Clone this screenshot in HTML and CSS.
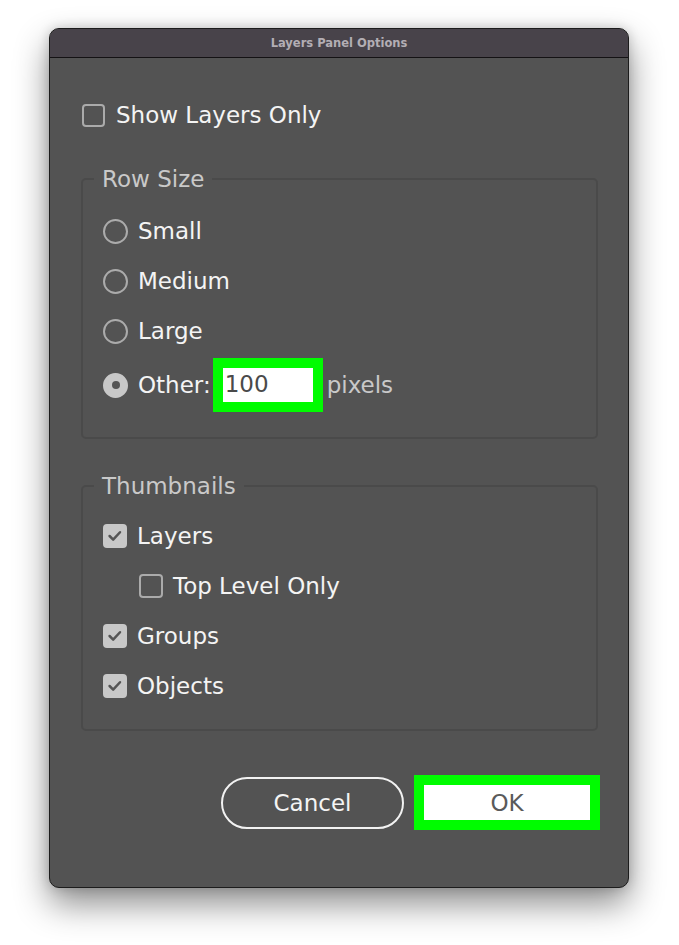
FILE: index.html
```html
<!DOCTYPE html>
<html>
<head>
<meta charset="utf-8">
<link rel="stylesheet" href="styles.css">
</head>
<body>
<div class="window">
  <div class="titlebar">Layers Panel Options</div>
  <div class="content">
    <div class="row top-row">
      <span class="check small"></span>
      <span class="label">Show Layers Only</span>
    </div>

    <fieldset class="group">
      <legend>Row Size</legend>
      <div class="row"><span class="radio"></span><span class="label">Small</span></div>
      <div class="row"><span class="radio"></span><span class="label">Medium</span></div>
      <div class="row"><span class="radio"></span><span class="label">Large</span></div>
      <div class="row other-row">
        <span class="radio on"></span><span class="label">Other:</span>
        <span class="highlight field"><span class="input">100</span></span>
        <span class="unit">pixels</span>
      </div>
    </fieldset>

    <fieldset class="group thumbs">
      <legend>Thumbnails</legend>
      <div class="row"><span class="check on"><svg viewBox="0 0 24 24"><path d="M5.5 12 L9.8 16.3 L18 7.5" /></svg></span><span class="label">Layers</span></div>
      <div class="row indent"><span class="check"></span><span class="label">Top Level Only</span></div>
      <div class="row"><span class="check on"><svg viewBox="0 0 24 24"><path d="M5.5 12 L9.8 16.3 L18 7.5" /></svg></span><span class="label">Groups</span></div>
      <div class="row"><span class="check on"><svg viewBox="0 0 24 24"><path d="M5.5 12 L9.8 16.3 L18 7.5" /></svg></span><span class="label">Objects</span></div>
    </fieldset>

    <div class="buttons">
      <span class="btn cancel">Cancel</span>
      <span class="highlight okwrap"><span class="btn ok">OK</span></span>
    </div>
  </div>
</div>
</body>
</html>
```

FILE: styles.css
```css
* { box-sizing: border-box; }
html, body { margin: 0; padding: 0; }
body {
  background: #ffffff;
  width: 679px;
  height: 945px;
  overflow: hidden;
  font-family: "DejaVu Sans", "Noto Sans", sans-serif;
}
.window {
  margin: 28px 0 0 49px;
  width: 580px;
  height: 860px;
  background: #535353;
  border: 1px solid #1c1c1c;
  border-radius: 10px;
  overflow: hidden;
  box-shadow: 0 16px 34px rgba(0,0,0,0.45), 0 0 12px rgba(0,0,0,0.18);
}
.titlebar {
  height: 29px;
  background: #48434a;
  border-bottom: 1px solid #141214;
  color: #b3aeb4;
  font-size: 11.5px;
  font-weight: bold;
  text-align: center;
  line-height: 28px;
}
.content {
  padding: 32px 30px 0 32px;
  color: #f2f2f2;
}
.row {
  display: flex;
  align-items: center;
  height: 50px;
}
.top-row { height: 50px; }
.label {
  font-size: 23px;
  color: #f4f4f4;
  margin-left: 10px;
  white-space: nowrap;
}
.top-row .label { margin-left: 11px; }
.check {
  width: 24px;
  height: 24px;
  border: 2px solid #ababab;
  border-radius: 4px;
  flex: none;
  display: flex;
  align-items: center;
  justify-content: center;
}
.check.small { width: 23px; height: 23px; }
.check.on {
  background: #c8c8c8;
  border-color: #c8c8c8;
}
.check svg {
  width: 22px;
  height: 22px;
  fill: none;
  stroke: #555555;
  stroke-width: 3;
  stroke-linecap: round;
  stroke-linejoin: round;
}
.radio {
  width: 25px;
  height: 25px;
  border: 2px solid #ababab;
  border-radius: 50%;
  flex: none;
}
.radio.on {
  background: #c8c8c8;
  border-color: #c8c8c8;
  display: flex;
  align-items: center;
  justify-content: center;
}
.radio.on::after {
  content: "";
  width: 8px;
  height: 8px;
  border-radius: 50%;
  background: #555555;
}
.group {
  margin: 25px 0 0 -1px;
  padding: 13px 0 25px 20px;
  border: 2px solid #4a4a4a;
  border-radius: 5px;
  min-width: 0;
}
.group legend {
  margin-left: -9px;
  padding: 0 8px;
  font-size: 23px;
  color: #c9c9c9;
  line-height: 28px;
}
.other-row { height: 54px; margin-top: 2px; }
.highlight {
  display: inline-block;
  border: 10px solid #00fc00;
}
.field {
  margin-left: 2px;
  width: 110px;
  height: 54px;
}
.input {
  display: block;
  width: 100%;
  height: 100%;
  background: #ffffff;
  color: #4a4a4a;
  font-size: 23px;
  line-height: 33px;
  padding-left: 2px;
}
.unit {
  font-size: 23px;
  color: #c9c9c9;
  margin-left: 4px;
}
.thumbs {
  margin-top: 33px;
  padding-top: 11px;
  padding-bottom: 18px;
}
.indent { padding-left: 36px; }
.buttons {
  display: flex;
  justify-content: flex-end;
  align-items: center;
  margin-top: 44px;
  margin-right: -2px;
}
.btn {
  display: flex;
  align-items: center;
  justify-content: center;
  font-size: 23px;
}
.cancel {
  width: 183px;
  height: 52px;
  border: 2px solid #f2f2f2;
  border-radius: 26px;
  color: #f4f4f4;
  margin-right: 10px;
}
.okwrap {
  width: 186px;
  height: 55px;
}
.ok {
  width: 100%;
  height: 100%;
  background: #ffffff;
  color: #5a5a5a;
}
```
